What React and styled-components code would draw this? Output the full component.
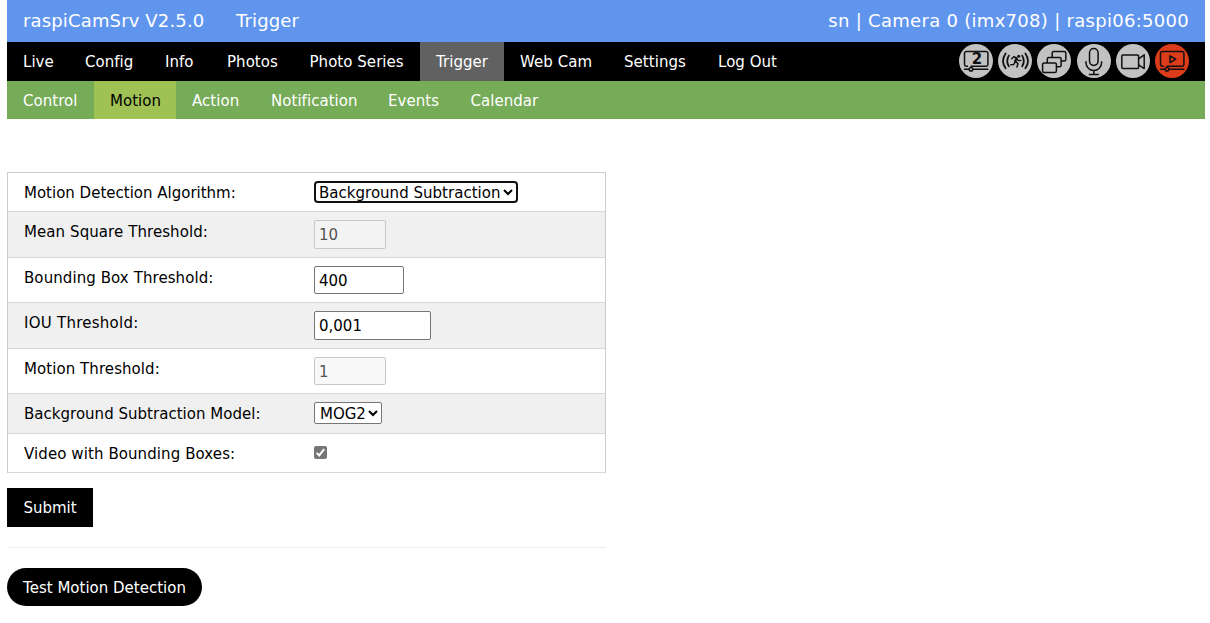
import React from 'react';
import styled, { createGlobalStyle } from 'styled-components';

const GlobalStyle = createGlobalStyle`
  *, *::before, *::after { box-sizing: border-box; }
  body {
    margin: 0;
    background: #fff;
    color: #000;
    font-family: Verdana, "DejaVu Sans", sans-serif;
    font-size: 15px;
    line-height: 22.5px;
    overflow: hidden;
  }
`;

const Page = styled.div`
  width: 1198px;
  margin-left: 7px;
`;

const TitleBar = styled.header`
  display: flex;
  height: 42px;
  padding: 0 16px;
  align-items: center;
  background: #6095ee;
  color: #fff;
  font-size: 18px;
  white-space: nowrap;
`;

const Title = styled.span`
  width: ${(p) => p.$width}px;
  letter-spacing: 0.15px;
`;

const Host = styled.span`
  margin-left: auto;
  letter-spacing: 0.29px;
`;

const Bar = styled.nav`
  display: flex;
  height: ${(p) => p.$height}px;
  background: ${(p) => p.$color};
`;

const Tab = styled.a`
  width: ${(p) => p.$width}px;
  padding: 9px 0 0 16px;
  color: ${(p) => p.$text || '#fff'};
  background: ${(p) => p.$fill || 'transparent'};
  letter-spacing: 0.04px;
  white-space: nowrap;
`;

const Status = styled.div`
  display: flex;
  gap: 5.2px;
  margin: 2px 16px 0 auto;
`;

const StatusIcon = styled.svg`
  width: 34px;
  height: 34px;
  color: ${(p) => p.$color};
  fill: none;
  stroke: #111;
  stroke-width: 1.5;
  stroke-linecap: round;
  stroke-linejoin: round;
`;

const Content = styled.main`
  width: 599px;
  padding-top: 53px;
`;

const Settings = styled.div`
  border: 1px solid #ccc;
  border-bottom: 0;
`;

const Row = styled.div`
  display: grid;
  grid-template-columns: 306px 1fr;
  height: ${(p) => p.$height}px;
  border-bottom: 1px solid #d8d8d8;
  background: ${(p) => (p.$shaded ? '#f0f0f0' : '#fff')};
`;

const Label = styled.label`
  padding: 9px 0 0 16px;
  letter-spacing: ${(p) => p.$spacing || 0}px;
`;

const Cell = styled.div`
  display: flex;
  align-items: flex-start;
  padding-top: 8px;
`;

const Input = styled.input`
  width: ${(p) => p.$width}px;
  height: ${(p) => p.$height || 28}px;
  padding: 2px 4px 1px;
  border: 1px solid #767676;
  border-radius: 2px;
  background: #fff;
  font: inherit;
  &:disabled {
    border-color: #c8c8c8;
    background: ${(p) => p.$tint || '#f8f8f8'};
    color: #545454;
  }
`;

const Select = styled.select`
  width: ${(p) => p.$width}px;
  height: 22px;
  padding: ${(p) => (p.$active ? '0' : '1px 0 0 1px')};
  border: ${(p) => (p.$active ? '2px solid #101010' : '1px solid #767676')};
  border-radius: ${(p) => (p.$active ? 4 : 2)}px;
  background: #fff;
  color: #000;
  font: inherit;
  letter-spacing: ${(p) => (p.$active ? 0.02 : 0)}px;
  text-indent: ${(p) => (p.$active ? -1 : 0)}px;
  line-height: 18px;
`;

const Check = styled.span`
  display: flex;
  width: 13px;
  height: 13px;
  margin-top: 4px;
  border-radius: 2px;
  background: #767676;
`;

const Button = styled.button`
  display: block;
  width: ${(p) => p.$width}px;
  height: ${(p) => p.$height}px;
  padding: 2px 0 0;
  border: 0;
  border-radius: ${(p) => p.$radius || 0}px;
  background: #000;
  color: #fff;
  font: inherit;
  margin-top: ${(p) => p.$top}px;
  white-space: nowrap;
`;

const Divider = styled.hr`
  height: 1px;
  margin: 20px 0 0;
  border: 0;
  background: #eee;
`;

const Badge = ({ color = '#c2c2c2', children }) => (
  <StatusIcon viewBox="0 0 34 34" $color={color}>
    <circle cx="17" cy="17" r="17" fill="currentColor" stroke="none" />
    {children}
  </StatusIcon>
);

const Player = () => (
  <>
    <path d="M8.5 22.2H7.2a1.7 1.7 0 0 1-1.7-1.7V9.2a1.7 1.7 0 0 1 1.7-1.7h20a1.7 1.7 0 0 1 1.7 1.7v11.3a1.7 1.7 0 0 1-1.7 1.7H12" />
    <path d="M5.5 25.2h4.6M14 25.2h14.9" />
    <circle cx="12" cy="25.2" r="1.8" />
  </>
);

const Digit = styled.text`
  font: bold 15px "DejaVu Sans", sans-serif;
  fill: #111;
  stroke: none;
  text-anchor: middle;
`;

const mainTabs = [
  ['Live', 62], ['Config', 80], ['Info', 62], ['Photos', 82.5], ['Photo Series', 126.5],
  ['Trigger', 84], ['Web Cam', 104], ['Settings', 94], ['Log Out', 92],
];
const subTabs = [
  ['Control', 87], ['Motion', 82], ['Action', 79], ['Notification', 117], ['Events', 82.5], ['Calendar', 100],
];

export default function App() {
  return (
    <Page>
      <GlobalStyle />
      <TitleBar>
        <Title $width={213}>raspiCamSrv V2.5.0</Title>
        <Title $width={70}>Trigger</Title>
        <Host>sn | Camera 0 (imx708) | raspi06:5000</Host>
      </TitleBar>
      <Bar $height={39} $color="#000">
        {mainTabs.map(([name, width]) => (
          <Tab key={name} $width={width} $fill={name === 'Trigger' ? '#616161' : undefined}>{name}</Tab>
        ))}
        <Status>
          <Badge>
            <Player />
            <Digit x="18" y="20.4">2</Digit>
          </Badge>
          <Badge>
            <path strokeWidth="1.8" d="M7.6 9.5Q2.4 17 7.6 24.3M10.8 11.6Q7.6 17 10.8 22.3M24.2 11.6q3.2 5.4 0 10.7M27.4 9.5q5.2 7.5 0 14.8" />
            <circle cx="20.7" cy="12.2" r="1.5" fill="#111" stroke="none" />
            <path d="M13.7 14.8l2.1-2 2.6 1 1.6 2.6 2.8.1M12.8 20.7l2.8-.1 1.8-3M18 17.7l2 2-1.1 3.3" />
            <path strokeWidth="2.2" d="M18.4 14.5l-1.3 3" />
          </Badge>
          <Badge>
            <rect x="15.2" y="7.6" width="13.6" height="9.4" rx="1.5" fill="currentColor" />
            <rect x="10.3" y="13.4" width="13.8" height="9.4" rx="1.5" fill="currentColor" />
            <rect x="5.6" y="19" width="13.8" height="9.4" rx="1.5" fill="currentColor" />
          </Badge>
          <Badge>
            <rect x="12.5" y="4.6" width="8.6" height="16.8" rx="4.3" />
            <path d="M9 17.8v1a7.8 7.8 0 0 0 15.6 0v-1M16.8 26.8v3.7M12.4 30.5h8.8" />
          </Badge>
          <Badge>
            <rect x="5.8" y="11" width="16.8" height="13.4" rx="1.2" />
            <path d="M22.6 14.8l5.6-4v13.8l-5.6-3.8" />
          </Badge>
          <Badge color="#dc3c1a">
            <Player />
            <path d="M15 11.8v6.8l5.8-3.4z" />
          </Badge>
        </Status>
      </Bar>
      <Bar $height={38} $color="#76ab57">
        {subTabs.map(([name, width]) => (
          <Tab
            key={name}
            $width={width}
            $fill={name === 'Motion' ? '#a0c255' : undefined}
            $text={name === 'Motion' ? '#000' : undefined}
          >
            {name}
          </Tab>
        ))}
      </Bar>
      <Content>
        <Settings>
          <Row $height={39}>
            <Label>Motion Detection Algorithm:</Label>
            <Cell><Select $width={204} $active><option>Background Subtraction</option></Select></Cell>
          </Row>
          <Row $height={46} $shaded>
            <Label $spacing={0.08}>Mean Square Threshold:</Label>
            <Cell><Input $width={72} $height={29} $tint="#f3f3f3" defaultValue="10" disabled /></Cell>
          </Row>
          <Row $height={45}>
            <Label $spacing={0.08}>Bounding Box Threshold:</Label>
            <Cell><Input $width={90} defaultValue="400" /></Cell>
          </Row>
          <Row $height={46} $shaded>
            <Label $spacing={0.25}>IOU Threshold:</Label>
            <Cell><Input $width={117} $height={29} defaultValue="0,001" /></Cell>
          </Row>
          <Row $height={45}>
            <Label $spacing={0.07}>Motion Threshold:</Label>
            <Cell><Input $width={72} defaultValue="1" disabled /></Cell>
          </Row>
          <Row $height={40} $shaded>
            <Label $spacing={0.02}>Background Subtraction Model:</Label>
            <Cell><Select $width={68}><option>MOG2</option></Select></Cell>
          </Row>
          <Row $height={39}>
            <Label $spacing={0.09}>Video with Bounding Boxes:</Label>
            <Cell>
              <Check>
                <svg width="13" height="13" viewBox="0 0 13 13" fill="none" stroke="#fff" strokeWidth="2">
                  <path d="M2.7 6.9l2.5 2.5 5-6.2" />
                </svg>
              </Check>
            </Cell>
          </Row>
        </Settings>
        <Button $width={86} $height={39} $top={15}>Submit</Button>
        <Divider />
        <Button $width={195} $height={38} $top={20} $radius={19}>Test Motion Detection</Button>
      </Content>
    </Page>
  );
}
